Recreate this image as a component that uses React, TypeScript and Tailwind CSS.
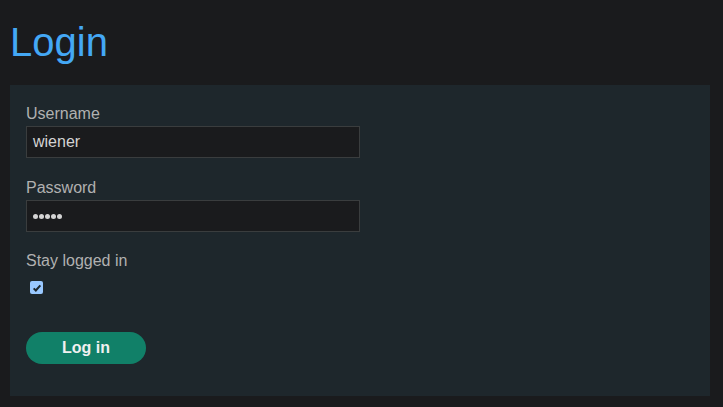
export default function App() {
  return (
    <div className="min-h-[407px] w-full bg-[#1a1b1d] font-['Liberation_Sans',Arial,sans-serif]">
      <div className="h-[85px] pl-[10px] pt-[19px]">
        <h1 className="text-[40px] leading-[46px] text-[#44a8f5]">Login</h1>
      </div>
      <div className="ml-[10px] w-[700px] bg-[#1e272c] px-4 pt-[17px] pb-8">
        <div className="flex flex-col">
          <label className="text-base leading-6 text-[#b1b1b1]">Username</label>
          <div className="flex h-8 w-[334px] items-center border border-[#3a3d3e] bg-[#1a1b1d] pl-[6px] text-base text-[#d4d4d4]">
            wiener
          </div>
        </div>
        <div className="mt-[18px] flex flex-col">
          <label className="text-base leading-6 text-[#b1b1b1]">Password</label>
          <div className="flex h-8 w-[334px] items-center border border-[#3a3d3e] bg-[#1a1b1d] pl-[6px] text-[#d4d4d4]">
            <span className="flex gap-[1px]">
              <span className="h-[5px] w-[5px] rounded-full bg-[#d4d4d4]" />
              <span className="h-[5px] w-[5px] rounded-full bg-[#d4d4d4]" />
              <span className="h-[5px] w-[5px] rounded-full bg-[#d4d4d4]" />
              <span className="h-[5px] w-[5px] rounded-full bg-[#d4d4d4]" />
              <span className="h-[5px] w-[5px] rounded-full bg-[#d4d4d4]" />
            </span>
          </div>
        </div>
        <div className="mt-[17px] flex flex-col">
          <label className="text-base leading-6 text-[#b1b1b1]">Stay logged in</label>
          <span className="mt-2 ml-1 flex h-[13px] w-[13px] items-center justify-center rounded-[2px] bg-[#99c8ff]">
            <svg viewBox="0 0 12 12" className="h-[10px] w-[10px]">
              <path d="M2 6.4 L4.6 9 L10 2.8" fill="none" stroke="#1e272c" strokeWidth="2.4" />
            </svg>
          </span>
        </div>
        <button className="mt-[38px] flex h-8 w-[120px] items-center justify-center rounded-full bg-[#118068] text-base font-bold text-[#f0f0f0]">
          Log in
        </button>
      </div>
    </div>
  );
}
